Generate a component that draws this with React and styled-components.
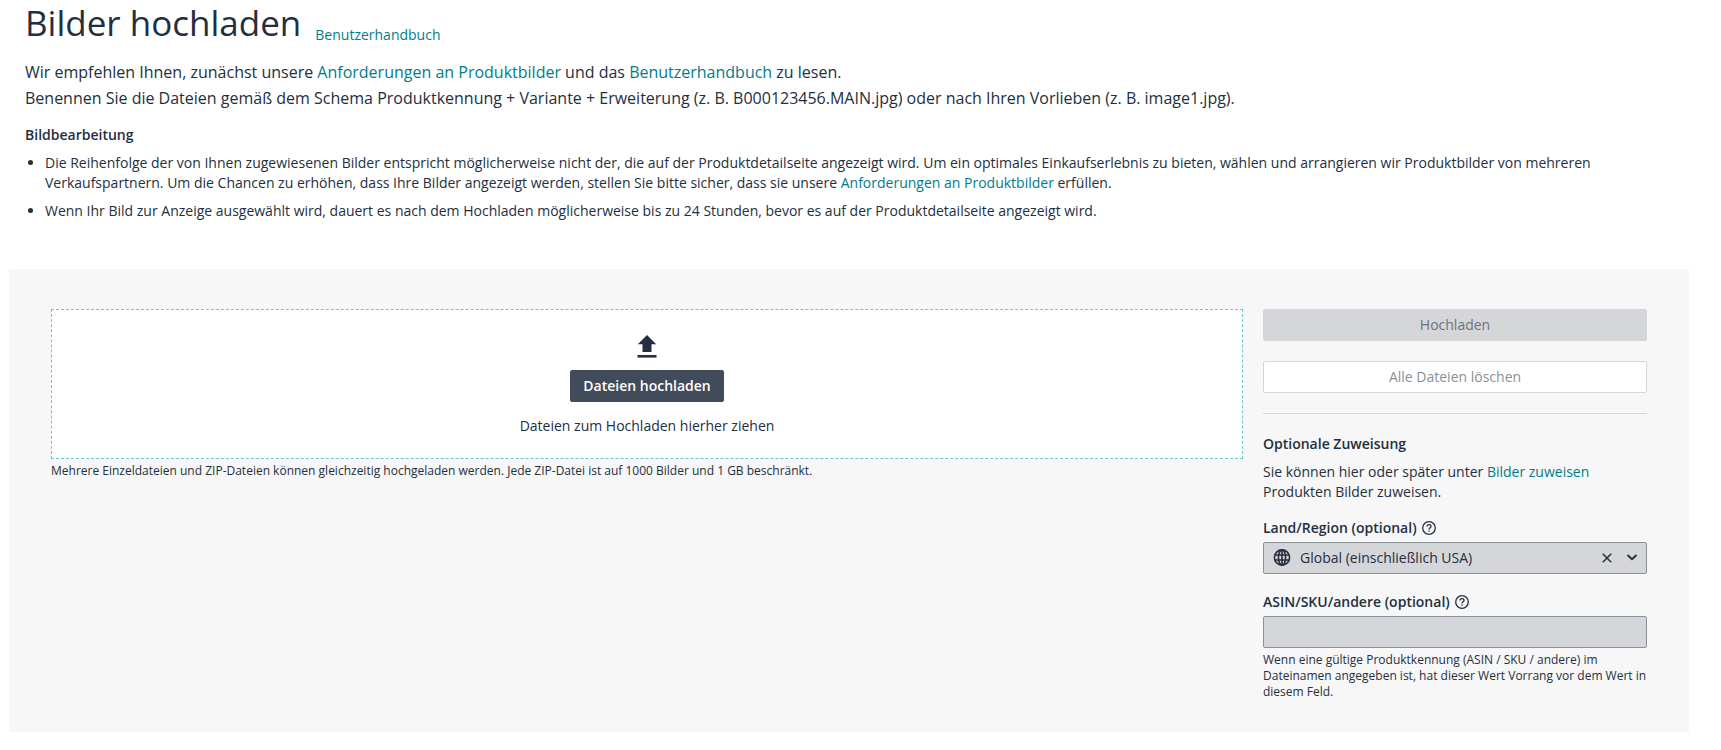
import React, { useState } from 'react';
import styled, { createGlobalStyle } from 'styled-components';

const GlobalStyle = createGlobalStyle`
  *, *::before, *::after {
    box-sizing: border-box;
  }

  body {
    margin: 0;
    background-color: #ffffff;
    color: #232f3e;
    font-family: "Open Sans", "Noto Sans", sans-serif;
    font-size: 14px;
    line-height: 20px;
  }

  h1, h2, h3, p, ul {
    margin: 0;
  }

  button, input, select {
    font: inherit;
    color: inherit;
  }
`;

const Page = styled.main`
  padding: 0 32px 18px 9px;
`;

const Header = styled.header`
  padding: 0 16px;
`;

const TitleRow = styled.div`
  display: flex;
  align-items: flex-end;
  gap: 14px;
  padding-bottom: 14px;
`;

const Title = styled.h1`
  font-size: 35px;
  font-weight: 400;
  line-height: 45px;
`;

const Link = styled.a`
  color: #007d8a;
  text-decoration: none;

  &:hover {
    text-decoration: underline;
  }
`;

const Intro = styled.p`
  font-size: 16px;
  line-height: 26px;
`;

const SectionTitle = styled.h2`
  font-size: 14px;
  font-weight: 600;
  line-height: 20px;
`;

const Notes = styled.section`
  padding-top: 14px;
`;

const NoteList = styled.ul`
  display: flex;
  flex-direction: column;
  gap: 8px;
  padding: 8px 72px 48px 20px;
`;

const Panel = styled.section`
  display: grid;
  grid-template-columns: minmax(0, 1fr) 384px;
  gap: 20px;
  padding: 40px 42px 32px;
  background-color: #f7f7f7;
`;

const DropZone = styled.div`
  display: flex;
  flex-direction: column;
  align-items: center;
  height: 150px;
  padding-top: 22px;
  border: 1px dashed #6cc5d1;
  background-color: #ffffff;
`;

const UploadIcon = styled.svg`
  width: 28px;
  height: 28px;
  margin-bottom: 10px;
  fill: currentColor;
`;

const Button = styled.button`
  height: 32px;
  padding: 0 12px;
  border: 1px solid ${(props) => props.$border};
  border-radius: 2px;
  background-color: ${(props) => props.$background};
  color: ${(props) => props.$color};
  font-weight: ${(props) => props.$weight || 400};
  line-height: 20px;
  cursor: pointer;

  &:disabled {
    cursor: default;
  }
`;

const DropText = styled.p`
  padding-top: 14px;
`;

const SmallText = styled.p`
  padding-top: 4px;
  font-size: 12px;
  line-height: 16px;
`;

const Sidebar = styled.aside`
  display: flex;
  flex-direction: column;
`;

const Actions = styled.div`
  display: flex;
  flex-direction: column;
  gap: 20px;
  padding-bottom: 20px;
  border-bottom: 1px solid #d5d6d9;
  margin-bottom: 20px;
`;

const SideText = styled.p`
  padding: 8px 0 16px;
`;

const Field = styled.div`
  display: flex;
  flex-direction: column;

  & + & {
    padding-top: 18px;
  }
`;

const LabelRow = styled.div`
  display: flex;
  align-items: center;
  gap: 5px;
  padding-bottom: 4px;
`;

const Label = styled.label`
  font-weight: 600;
`;

const HelpIcon = styled.svg`
  width: 14px;
  height: 14px;
  fill: none;
  stroke: currentColor;
`;

const SelectBox = styled.div`
  display: flex;
  align-items: center;
  height: 32px;
  padding: 0 8px 0 9px;
  border: 1px solid #879196;
  border-radius: 2px;
  background-color: #d5d6d9;
`;

const GlobeIcon = styled.svg`
  width: 18px;
  height: 18px;
  fill: none;
  stroke: currentColor;
`;

const Select = styled.select`
  flex: 1;
  min-width: 0;
  height: 30px;
  padding: 0 9px;
  border: 0;
  background: none;
  appearance: none;
  outline: none;
`;

const ClearButton = styled.button`
  display: flex;
  padding: 3px;
  margin-right: 10px;
  border: 0;
  background: none;
  cursor: pointer;
`;

const SmallIcon = styled.svg`
  width: 12px;
  height: 12px;
  fill: none;
  stroke: currentColor;
`;

const TextInput = styled.input`
  width: 100%;
  height: 32px;
  padding: 0 10px;
  border: 1px solid #879196;
  border-radius: 2px;
  background-color: #d5d6d9;
`;

const Help = () => (
  <HelpIcon viewBox="0 0 14 14" aria-hidden="true">
    <circle cx="7" cy="7" r="6.3" strokeWidth="1.3" />
    <path d="M5 5.6C5 4.4 5.8 3.7 7 3.7s2 .7 2 1.7c0 1.3-1.9 1.5-1.9 3" strokeWidth="1.3" />
    <path d="M7.1 9.5v1.3" strokeWidth="1.4" />
  </HelpIcon>
);

const App = () => {
  const [region, setRegion] = useState('global');
  const [productId, setProductId] = useState('');

  return (
    <Page>
      <GlobalStyle />
      <Header>
        <TitleRow>
          <Title>Bilder hochladen</Title>
          <Link href="#handbuch">Benutzerhandbuch</Link>
        </TitleRow>
        <Intro>
          Wir empfehlen Ihnen, zunächst unsere <Link href="#anforderungen">Anforderungen an Produktbilder</Link> und
          das <Link href="#handbuch">Benutzerhandbuch</Link> zu lesen.
        </Intro>
        <Intro>
          Benennen Sie die Dateien gemäß dem Schema Produktkennung + Variante + Erweiterung (z. B.
          B000123456.MAIN.jpg) oder nach Ihren Vorlieben (z. B. image1.jpg).
        </Intro>
        <Notes>
          <SectionTitle>Bildbearbeitung</SectionTitle>
          <NoteList>
            <li>
              Die Reihenfolge der von Ihnen zugewiesenen Bilder entspricht möglicherweise nicht der, die auf der
              Produktdetailseite angezeigt wird. Um ein optimales Einkaufserlebnis zu bieten, wählen und arrangieren
              wir Produktbilder von mehreren Verkaufspartnern. Um die Chancen zu erhöhen, dass Ihre Bilder angezeigt
              werden, stellen Sie bitte sicher, dass sie
              unsere <Link href="#anforderungen">Anforderungen an Produktbilder</Link> erfüllen.
            </li>
            <li>
              Wenn Ihr Bild zur Anzeige ausgewählt wird, dauert es nach dem Hochladen möglicherweise bis zu 24 Stunden,
              bevor es auf der Produktdetailseite angezeigt wird.
            </li>
          </NoteList>
        </Notes>
      </Header>

      <Panel>
        <div>
          <DropZone>
            <UploadIcon viewBox="0 0 28 28" aria-hidden="true">
              <path d="M14 3L4.8 12.3h4.7V20h9v-7.7h4.7z" />
              <path d="M4.5 23h19v2.6h-19z" />
            </UploadIcon>
            <Button type="button" $background="#414b59" $border="#414b59" $color="#ffffff" $weight={600}>
              Dateien hochladen
            </Button>
            <DropText>Dateien zum Hochladen hierher ziehen</DropText>
          </DropZone>
          <SmallText>
            Mehrere Einzeldateien und ZIP-Dateien können gleichzeitig hochgeladen werden. Jede ZIP-Datei ist auf 1000
            Bilder und 1 GB beschränkt.
          </SmallText>
        </div>

        <Sidebar>
          <Actions>
            <Button type="button" disabled $background="#d5d6d9" $border="#d5d6d9" $color="#6a7380">
              Hochladen
            </Button>
            <Button type="button" disabled $background="#ffffff" $border="#d5d6d9" $color="#879196">
              Alle Dateien löschen
            </Button>
          </Actions>
          <SectionTitle>Optionale Zuweisung</SectionTitle>
          <SideText>
            Sie können hier oder später unter <Link href="#zuweisen">Bilder zuweisen</Link> Produkten Bilder zuweisen.
          </SideText>
          <Field>
            <LabelRow>
              <Label htmlFor="region">Land/Region (optional)</Label>
              <Help />
            </LabelRow>
            <SelectBox>
              <GlobeIcon viewBox="0 0 18 18" strokeWidth="1.6" aria-hidden="true">
                <circle cx="9" cy="8.5" r="7.6" />
                <ellipse cx="9" cy="8.5" rx="3.6" ry="7.6" />
                <path d="M9 1v15M1.9 6h14.2M1.9 11h14.2" />
              </GlobeIcon>
              <Select id="region" value={region} onChange={(e) => setRegion(e.target.value)}>
                <option value="">Land/Region auswählen</option>
                <option value="global">Global (einschließlich USA)</option>
              </Select>
              <ClearButton type="button" aria-label="Auswahl löschen" onClick={() => setRegion('')}>
                <SmallIcon viewBox="0 0 12 12" strokeWidth="1.5" aria-hidden="true">
                  <path d="M1.8 1.8l8.4 8.4M10.2 1.8l-8.4 8.4" />
                </SmallIcon>
              </ClearButton>
              <SmallIcon viewBox="0 0 12 12" strokeWidth="1.9" aria-hidden="true">
                <path d="M1.5 3L6 7.3 10.5 3" />
              </SmallIcon>
            </SelectBox>
          </Field>
          <Field>
            <LabelRow>
              <Label htmlFor="product-id">ASIN/SKU/andere (optional)</Label>
              <Help />
            </LabelRow>
            <TextInput
              id="product-id"
              type="text"
              value={productId}
              onChange={(e) => setProductId(e.target.value)}
            />
            <SmallText>
              Wenn eine gültige Produktkennung (ASIN / SKU / andere) im Dateinamen angegeben ist, hat dieser Wert
              Vorrang vor dem Wert in diesem Feld.
            </SmallText>
          </Field>
        </Sidebar>
      </Panel>
    </Page>
  );
};

export default App;
